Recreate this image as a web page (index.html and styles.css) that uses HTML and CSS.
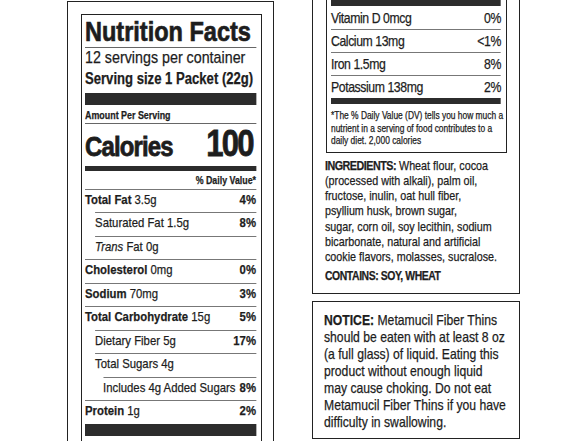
FILE: index.html
```
<!DOCTYPE html>
<html lang="en-US">
  <head>
    <title>Metamucil Fiber Thins - Nutrition Facts</title>
    <link rel="stylesheet" href="styles.css">
  </head>
  <body>
    <div class="sheet">
      <section class="panel panel-facts">
        <div class="label">
          <div class="condensed">
            <h1 class="title">Nutrition Facts</h1>
            <p class="servings">12 servings per container</p>
            <p class="serving-size">Serving size 1 Packet (22g)</p>
            <div class="bar bar-thick"></div>
            <p class="amount">Amount Per Serving</p>
            <div class="calories"><span class="cal-word">Calories</span><span class="cal-num">100</span></div>
            <div class="bar bar-mid"></div>
            <p class="dv-head">% Daily Value*</p>
            <ul class="rows">
              <li class="row"><span><b>Total Fat</b> 3.5g</span><b>4%</b></li>
              <li class="row indent-1"><span>Saturated Fat 1.5g</span><b>8%</b></li>
              <li class="row indent-1"><span><i>Trans</i> Fat 0g</span></li>
              <li class="row"><span><b>Cholesterol</b> 0mg</span><b>0%</b></li>
              <li class="row"><span><b>Sodium</b> 70mg</span><b>3%</b></li>
              <li class="row"><span><b>Total Carbohydrate</b> 15g</span><b>5%</b></li>
              <li class="row indent-1"><span>Dietary Fiber 5g</span><b>17%</b></li>
              <li class="row indent-1"><span>Total Sugars 4g</span></li>
              <li class="row indent-2"><span>Includes 4g Added Sugars</span><b>8%</b></li>
              <li class="row"><span><b>Protein</b> 1g</span><b>2%</b></li>
            </ul>
            <div class="bar bar-thick"></div>
          </div>
        </div>
      </section>

      <div class="col-right">
        <section class="panel panel-more">
          <div class="label label-cont">
            <div class="condensed">
              <div class="bar bar-six"></div>
              <ul class="rows rows-vit">
                <li class="row"><span>Vitamin D 0mcg</span><span>0%</span></li>
                <li class="row"><span>Calcium 13mg</span><span>&lt;1%</span></li>
                <li class="row"><span>Iron 1.5mg</span><span>8%</span></li>
                <li class="row"><span>Potassium 138mg</span><span>2%</span></li>
              </ul>
              <div class="bar bar-six"></div>
              <p class="footnote">*The % Daily Value (DV) tells you how much a<br>nutrient in a serving of food contributes to a<br>daily diet. 2,000 calories</p>
            </div>
          </div>
          <div class="condensed">
            <p class="ingredients"><b>INGREDIENTS:</b> Wheat flour, cocoa<br>(processed with alkali), palm oil,<br>fructose, inulin, oat hull fiber,<br>psyllium husk, brown sugar,<br>sugar, corn oil, soy lecithin, sodium<br>bicarbonate, natural and artificial<br>cookie flavors, molasses, sucralose.</p>
            <p class="contains"><b>CONTAINS: SOY, WHEAT</b></p>
          </div>
        </section>

        <section class="panel notice">
          <div class="condensed">
            <p><b>NOTICE:</b> Metamucil Fiber Thins<br>should be eaten with at least 8 oz<br>(a full glass) of liquid. Eating this<br>product without enough liquid<br>may cause choking. Do not eat<br>Metamucil Fiber Thins if you have<br>difficulty in swallowing.</p>
          </div>
        </section>
      </div>
    </div>
  </body>
</html>
```

FILE: styles.css
```
html, body {
  margin: 0;
  height: 441px;
  overflow: hidden;
  background: #fff;
}
body {
  color: #1d1d1d;
  font-family: "Liberation Sans", Arial, sans-serif;
}
p, h1, ul {
  margin: 0;
  padding: 0;
}
ul {
  list-style: none;
}

/* Liberation Sans squeezed to the width of a condensed label face */
.condensed {
  width: calc(100% / 0.84);
  transform: scaleX(0.84);
  transform-origin: 0 0;
  -webkit-text-stroke: 0.25px #1d1d1d;
}

.sheet {
  display: flex;
  align-items: flex-start;
  gap: 38px;
  padding-left: 67px;
}

.panel {
  border: 1.5px solid #222;
  box-sizing: border-box;
}
.label {
  border: 1.5px solid #222;
}
.bar {
  background: #2c2c2c;
}
.bar-thick {
  height: 12px;
}
.bar-mid {
  height: 5px;
}
.bar-six {
  height: 6px;
}

/* left panel */
.panel-facts {
  width: 207px;
  height: 470px;
  margin-top: 1px;
  border-bottom: none;
  padding: 12px 11.5px 0 12.5px;
}
.panel-facts .label {
  border-bottom: none;
  height: 460px;
  padding: 0 4.5px 0 3.5px;
}
.title {
  font-size: 28px;
  line-height: 30px;
  font-weight: bold;
  padding-top: 1.5px;
  border-bottom: 1px solid #666;
  -webkit-text-stroke: 0.7px #1d1d1d;
}
.servings {
  font-size: 17px;
  line-height: 20px;
}
.serving-size {
  font-size: 15.6px;
  line-height: 20px;
  font-weight: bold;
  padding-top: 1px;
}
.serving-size + .bar {
  margin-top: 4.5px;
}
.amount {
  font-size: 10.6px;
  line-height: 12px;
  font-weight: bold;
  padding: 4.3px 0 1.7px;
  border-bottom: 1px solid #666;
}
.calories {
  display: flex;
  justify-content: space-between;
  align-items: baseline;
  line-height: 36px;
  padding-top: 2.5px;
  font-weight: bold;
  -webkit-text-stroke: 0.8px #1d1d1d;
}
.cal-word {
  font-size: 28.5px;
  line-height: 28px;
  letter-spacing: -1px;
}
.cal-num {
  font-size: 37px;
  letter-spacing: -2.2px;
  margin-right: 4px;
}
.calories + .bar {
  margin-top: 3.5px;
}
.dv-head {
  font-size: 10.5px;
  line-height: 12px;
  font-weight: bold;
  text-align: right;
  padding: 3.4px 0 2.6px;
}

.row {
  display: flex;
  justify-content: space-between;
  border-top: 1px solid #777;
  font-size: 13.5px;
  line-height: 19px;
  padding-bottom: 3.5px;
}
.indent-1 {
  margin-left: 12px;
}
.indent-2 {
  margin-left: 21.5px;
}

/* right column */
.col-right {
  width: 208px;
}
.panel-more {
  border-top: none;
  height: 294px;
  padding: 0 12.5px 0 11.5px;
}
.label-cont {
  border-top: none;
  margin-left: 1px;
  padding: 0 4.5px;
}
.rows-vit .row {
  font-size: 14.6px;
  letter-spacing: -0.5px;
  line-height: 21px;
  padding: 1px 0 0;
}
.rows-vit .row:first-child {
  border-top-color: transparent;
}
.footnote {
  font-size: 10px;
  line-height: 12.5px;
  white-space: nowrap;
  padding: 6.3px 0 4px;
}
.ingredients {
  font-size: 12.8px;
  line-height: 15.2px;
  white-space: nowrap;
  margin-top: 5px;
}
.ingredients b {
  letter-spacing: -0.6px;
}
.contains {
  font-size: 12.4px;
  line-height: 15.2px;
  letter-spacing: -0.5px;
  margin-top: 4.8px;
}

.notice {
  margin-top: 7px;
  height: 138px;
  padding: 9.5px 8px 0 10.5px;
}
.notice p {
  font-size: 14.5px;
  line-height: 17px;
  white-space: nowrap;
}
```
